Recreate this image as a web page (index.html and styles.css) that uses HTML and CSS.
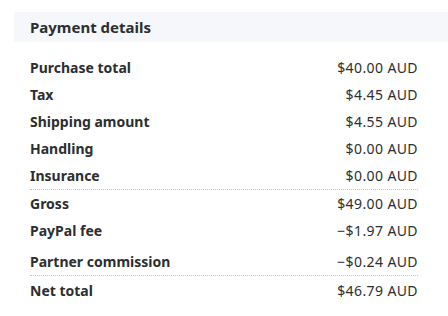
FILE: index.html
```html
<!DOCTYPE html>
<html lang="en">
<head>
  <meta charset="UTF-8" />
  <meta name="viewport" content="width=device-width, initial-scale=1.0"/>
  <title>Payment details</title>
  <link rel="stylesheet" href="styles.css">
</head>
<body>
  <div class="panel">
    <h3 class="panel-title">Payment details</h3>

    <div class="breakdown">
      <div class="row"><span class="label">Purchase total</span><span class="amount">$40.00 AUD</span></div>
      <div class="row"><span class="label">Tax</span><span class="amount">$4.45 AUD</span></div>
      <div class="row"><span class="label">Shipping amount</span><span class="amount">$4.55 AUD</span></div>
      <div class="row"><span class="label">Handling</span><span class="amount">$0.00 AUD</span></div>
      <div class="row divider"><span class="label">Insurance</span><span class="amount">$0.00 AUD</span></div>
      <div class="row"><span class="label">Gross</span><span class="amount">$49.00 AUD</span></div>
      <div class="row"><span class="label">PayPal fee</span><span class="amount">&minus;$1.97 AUD</span></div>
      <div class="row spaced divider"><span class="label">Partner commission</span><span class="amount">&minus;$0.24 AUD</span></div>
      <div class="row"><span class="label">Net total</span><span class="amount">$46.79 AUD</span></div>
    </div>
  </div>
</body>
</html>
```

FILE: styles.css
```css
* {
  box-sizing: border-box;
}

body {
  margin: 0;
  background: #fff;
  font-family: 'Noto Sans', sans-serif;
  color: #2c2e2f;
}

.panel {
  padding: 12px 0 0 14px;
}

.panel-title {
  margin: 0;
  height: 30px;
  line-height: 30px;
  padding: 0 16px;
  background: #f5f7fa;
  font-size: 15px;
  font-weight: 700;
}

.breakdown {
  margin-top: 12px;
  padding: 0 30px 0 16px;
}

.row {
  display: flex;
  justify-content: space-between;
  font-size: 14px;
  line-height: 27px;
}

.row.divider {
  border-bottom: 1px dotted #c4c8cc;
}

.row.spaced {
  padding-top: 4px;
}

.row:last-child {
  padding-top: 1px;
}

.label {
  font-weight: 700;
}

.amount {
  font-weight: 400;
  letter-spacing: 0.4px;
}
```
